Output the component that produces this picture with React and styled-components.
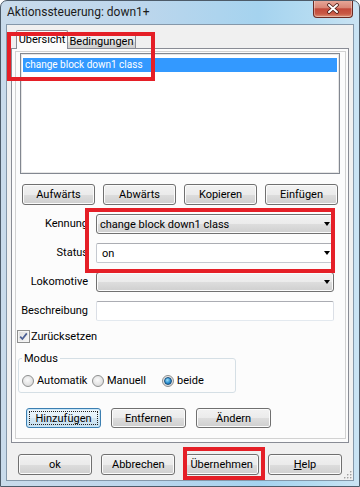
import React from "react";
import styled, { createGlobalStyle } from "styled-components";

const GlobalStyle = createGlobalStyle`
  html, body {
    margin: 0;
    padding: 0;
    background: #ffffff;
  }
  body {
    font-family: Roboto, "Liberation Sans", Arial, sans-serif;
    font-size: 11px;
    color: #000;
  }
  * {
    box-sizing: border-box;
  }
`;

const Win = styled.div`
  position: relative;
  width: 360px;
  height: 487px;
  display: flex;
  flex-direction: column;
  padding: 0 5px 5px;
  border: 1px solid #4d5b69;
  border-radius: 7px 7px 0 0;
  background: linear-gradient(
    to right,
    #c9dbeb 0%,
    #bcd6ec 40%,
    #a5d3ef 72%,
    #b6dcf1 88%,
    #cae3f3 100%
  );
  overflow: hidden;
`;

const TitleBar = styled.div`
  height: 23px;
  display: flex;
  align-items: flex-start;
  padding-left: 1px;
`;

const Title = styled.span`
  font-size: 12px;
  line-height: 23px;
  color: #1b1b1b;
`;

const CloseBtn = styled.div`
  margin-left: auto;
  margin-top: -1px;
  margin-right: 1px;
  width: 40px;
  height: 18px;
  display: flex;
  align-items: center;
  justify-content: center;
  border: 1px solid #6b2a23;
  border-top: none;
  border-radius: 0 0 4px 4px;
  background: linear-gradient(
    #e8aa9c 0%,
    #d98676 45%,
    #c2493a 52%,
    #c95a46 82%,
    #dd9479 100%
  );
  box-shadow: inset 0 0 0 1px rgba(255, 255, 255, 0.35);
`;

const Client = styled.div`
  position: relative;
  flex: 1;
  display: flex;
  flex-direction: column;
  padding: 5px 4px;
  background: #f0f0f0;
  border: 1px solid #8598aa;
`;

const TabStrip = styled.div`
  height: 18px;
  display: flex;
  align-items: flex-end;
  padding-left: 5px;
`;

const Tab = styled.div`
  position: relative;
  z-index: 1;
  width: ${p => p.$w}px;
  height: ${p => (p.$active ? 19 : 14)}px;
  margin-bottom: ${p => (p.$active ? -1 : 0)}px;
  display: flex;
  align-items: ${p => (p.$active ? "flex-start" : "center")};
  justify-content: center;
  padding-top: ${p => (p.$active ? 2 : 0)}px;
  border: 1px solid #898c95;
  border-bottom: none;
  border-left: ${p => (p.$active ? "1px solid #898c95" : "none")};
  border-radius: 2px 2px 0 0;
  background: ${p =>
    p.$active ? "#fcfcfc" : "linear-gradient(#f2f2f2, #ebebeb 50%, #dddddd 51%, #cfcfcf)"};
  line-height: 13px;
`;

const Panel = styled.div`
  height: 395px;
  display: flex;
  padding: 2px 2px 3px 3px;
  background: #fcfcfc;
  border: 1px solid #898c95;
`;

const PanelInner = styled.div`
  flex: 1;
  display: flex;
  flex-direction: column;
  border: 1px solid #d2d2d2;
`;

const ListBox = styled.div`
  height: 121px;
  margin: 1px 5px 0 4px;
  padding: 4px 2px 0;
  background: #ffffff;
  border: 1px solid #828790;
  box-shadow: inset 0 0 0 1px #e6e6e6;
`;

const ListItem = styled.div`
  height: 14px;
  padding-left: 2px;
  font-size: 10px;
  line-height: 14px;
  color: ${p => (p.$selected ? "#ffffff" : "#000")};
  background: ${p => (p.$selected ? "#3399ff" : "transparent")};
`;

const ButtonRow = styled.div`
  display: flex;
  gap: ${p => p.$gap}px;
  margin: ${p => p.$margin};
`;

const Button = styled.div`
  width: ${p => p.$w}px;
  height: ${p => p.$h || 21}px;
  display: flex;
  align-items: center;
  justify-content: center;
  border: 1px solid ${p => (p.$focused ? "#3c7fb1" : "#707070")};
  border-radius: 3px;
  background: ${p =>
    p.$focused
      ? "linear-gradient(#edf6fc 0%, #e3f0f9 50%, #d3e7f4 51%, #c6dfef 100%)"
      : "linear-gradient(#f2f2f2 0%, #ebebeb 50%, #dddddd 51%, #cfcfcf 100%)"};
  box-shadow: inset 0 0 0 1px ${p => (p.$focused ? "#c8e6f8" : "#fbfbfb")};
  outline: ${p => (p.$focused ? "1px dotted #222" : "none")};
  outline-offset: -4px;
  color: #000;
  u {
    text-decoration: underline;
  }
`;

const FormGrid = styled.div`
  display: grid;
  grid-template-columns: 68px 238px;
  column-gap: 8px;
  row-gap: 9px;
  margin: 9px 0 0 4px;
`;

const Label = styled.div`
  height: 20px;
  line-height: 20px;
  text-align: right;
  white-space: nowrap;
`;

const Combo = styled.div`
  position: relative;
  height: 20px;
  display: flex;
  align-items: center;
  padding-left: ${p => (p.$editable ? 5 : 3)}px;
  border: 1px solid ${p => (p.$editable ? "#c5c9d0" : "#707070")};
  border-top-color: ${p => (p.$editable ? "#abadb3" : "#707070")};
  border-radius: ${p => (p.$editable ? 2 : 3)}px;
  background: ${p =>
    p.$editable
      ? "#ffffff"
      : "linear-gradient(#f2f2f2 0%, #ebebeb 50%, #dddddd 51%, #cfcfcf 100%)"};
  box-shadow: ${p => (p.$editable ? "none" : "inset 0 0 0 1px #fbfbfb")};
`;

const Arrow = styled.span`
  position: absolute;
  right: 3px;
  top: 7px;
  width: 0;
  height: 0;
  border-left: 3.5px solid transparent;
  border-right: 3.5px solid transparent;
  border-top: 4px solid #000;
`;

const TextInput = styled.div`
  height: 20px;
  background: #ffffff;
  border: 1px solid #dbdfe6;
  border-top-color: #abadb3;
  border-bottom-color: #e3e9ef;
  border-radius: 2px;
`;

const CheckRow = styled.div`
  display: flex;
  align-items: center;
  gap: 1px;
  height: 13px;
  margin: 9px 0 0 1px;
`;

const CheckBox = styled.span`
  width: 13px;
  height: 13px;
  display: inline-flex;
  align-items: center;
  justify-content: center;
  border: 1px solid #8e8f8f;
  background: linear-gradient(135deg, #dcdcdc, #f7f7f7);
  box-shadow: inset 0 0 0 1px #f4f4f4;
`;

const GroupBox = styled.fieldset`
  width: 218px;
  margin: 9px 0 0 2px;
  padding: 9px 3px 5px;
  border: 1px solid #d5dfe5;
  border-radius: 3px;
  min-inline-size: 0;
`;

const Legend = styled.legend`
  padding: 0 2px;
  line-height: 13px;
`;

const RadioRow = styled.div`
  display: flex;
  height: 13px;
`;

const RadioItem = styled.label`
  width: 71px;
  display: flex;
  align-items: center;
  gap: 3px;
  line-height: 13px;
`;

const Radio = styled.span`
  width: 12px;
  height: 12px;
  display: inline-flex;
  align-items: center;
  justify-content: center;
  border-radius: 50%;
  border: 1px solid #8e8f8f;
  background: radial-gradient(circle at 45% 40%, #fafafa 0%, #e4e4e4 55%, #cfcfcf 100%);
  &::after {
    content: "";
    display: ${p => (p.$on ? "block" : "none")};
    width: 6px;
    height: 6px;
    border-radius: 50%;
    border: 1px solid #1a4f7d;
    background: radial-gradient(circle at 40% 35%, #9ee0fb 0%, #2a8fd0 55%, #0f5c99 100%);
  }
`;

const Footer = styled.div`
  display: flex;
  justify-content: space-between;
  margin-top: 11px;
  padding: 0 7px 0 7px;
`;

const Grip = styled.svg`
  position: absolute;
  right: 1px;
  bottom: 1px;
`;

const Mark = styled.div`
  position: absolute;
  left: ${p => p.$x}px;
  top: ${p => p.$y}px;
  width: ${p => p.$w}px;
  height: ${p => p.$h}px;
  border: 4px solid #e51f27;
  pointer-events: none;
  z-index: 5;
`;

function App() {
  return (
    <>
      <GlobalStyle />
      <Win>
        <TitleBar>
          <Title>Aktionssteuerung: down1+</Title>
          <CloseBtn>
            <svg width="14" height="11" viewBox="0 0 14 11">
              <path d="M3 2 L11 9 M11 2 L3 9" stroke="#4a1c17" strokeWidth="3.6" strokeLinecap="round" />
              <path d="M3 2 L11 9 M11 2 L3 9" stroke="#ffffff" strokeWidth="2" strokeLinecap="round" />
            </svg>
          </CloseBtn>
        </TitleBar>
        <Client>
          <TabStrip>
            <Tab $active $w={52}>Übersicht</Tab>
            <Tab $w={68}>Bedingungen</Tab>
          </TabStrip>
          <Panel>
            <PanelInner>
              <ListBox>
                <ListItem $selected>change block down1 class</ListItem>
              </ListBox>
              <ButtonRow $gap={8} $margin="10px 0 0 6px">
                <Button $w={73}>Aufwärts</Button>
                <Button $w={73}>Abwärts</Button>
                <Button $w={73}>Kopieren</Button>
                <Button $w={73}>Einfügen</Button>
              </ButtonRow>
              <FormGrid>
                <Label>Kennung</Label>
                <Combo>
                  change block down1 class
                  <Arrow />
                </Combo>
                <Label>Status</Label>
                <Combo $editable>
                  on
                  <Arrow />
                </Combo>
                <Label>Lokomotive</Label>
                <Combo>
                  <Arrow />
                </Combo>
                <Label>Beschreibung</Label>
                <TextInput />
              </FormGrid>
              <CheckRow>
                <CheckBox>
                  <svg width="9" height="9" viewBox="0 0 9 9">
                    <path d="M1.2 4.6 L3.4 7 L7.8 1.4" fill="none" stroke="#4b5f94" strokeWidth="1.7" />
                  </svg>
                </CheckBox>
                <span>Zurücksetzen</span>
              </CheckRow>
              <GroupBox>
                <Legend>Modus</Legend>
                <RadioRow>
                  <RadioItem>
                    <Radio />
                    Automatik
                  </RadioItem>
                  <RadioItem>
                    <Radio />
                    Manuell
                  </RadioItem>
                  <RadioItem>
                    <Radio $on />
                    beide
                  </RadioItem>
                </RadioRow>
              </GroupBox>
              <ButtonRow $gap={10} $margin="15px 0 0 10px">
                <Button $w={75} $h={20} $focused>Hinzufügen</Button>
                <Button $w={75} $h={20}>Entfernen</Button>
                <Button $w={75} $h={20}>Ändern</Button>
              </ButtonRow>
            </PanelInner>
          </Panel>
          <Footer>
            <Button $w={74}>ok</Button>
            <Button $w={74}>Abbrechen</Button>
            <Button $w={74}>Übernehmen</Button>
            <Button $w={74}>
              <span><u>H</u>elp</span>
            </Button>
          </Footer>
          <Grip width="8" height="8" viewBox="0 0 8 8">
            {[[6, 0], [3, 3], [6, 3], [0, 6], [3, 6], [6, 6]].map(([x, y]) => (
              <g key={`${x}-${y}`}>
                <rect x={x + 0.5} y={y + 0.5} width="1.5" height="1.5" fill="#ffffff" />
                <rect x={x} y={y} width="1.5" height="1.5" fill="#a0a0a0" />
              </g>
            ))}
          </Grip>
        </Client>
        <Mark $x={6} $y={31} $w={148} $h={49} />
        <Mark $x={84} $y={207} $w={250} $h={65} />
        <Mark $x={182} $y={446} $w={82} $h={33} />
      </Win>
    </>
  );
}

export default App;
